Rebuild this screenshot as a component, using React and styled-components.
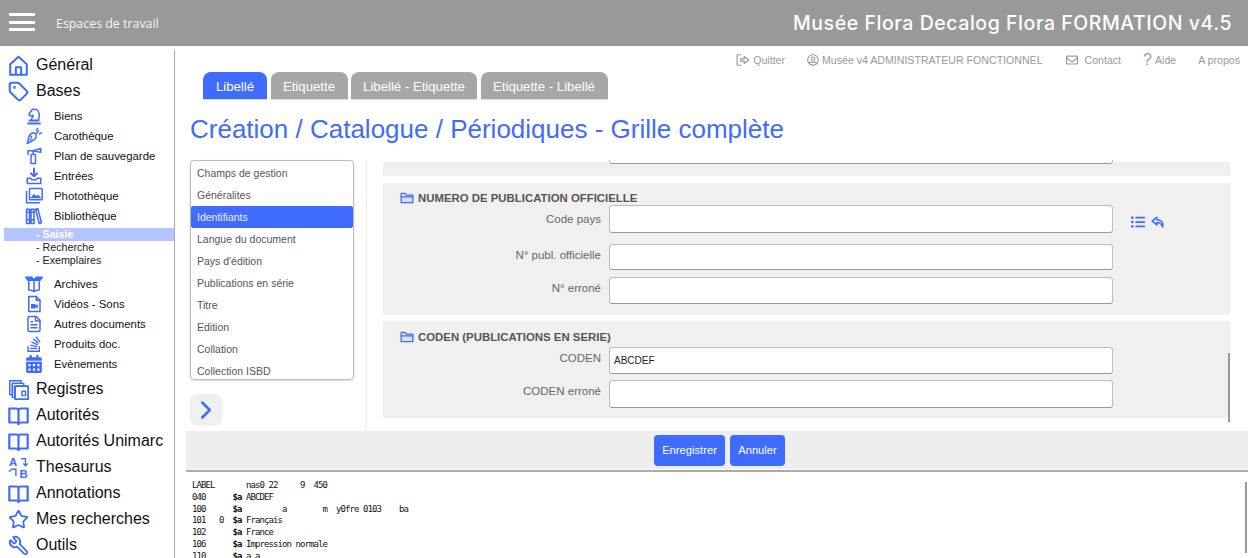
import React from "react"
import styled, { createGlobalStyle } from "styled-components"
import { Tag, FileText, Star, Wrench, ChevronRight } from "lucide-react"
import { FaStackOverflow, FaCalendarAlt, FaRegUserCircle, FaRegEnvelope, FaListUl } from "react-icons/fa"

const BLUE = "#3f6bff"

const Global = createGlobalStyle`
  html, body { margin: 0; padding: 0; background: #fff; }
  body { font-family: "Liberation Sans", Arial, sans-serif; color: #111; }
`

const Page = styled.div`
  width: 1248px;
  height: 558px;
  display: flex;
  flex-direction: column;
  overflow: hidden;
`

const Header = styled.header`
  height: 46px;
  flex: none;
  background: #999;
  color: #fff;
  display: flex;
  align-items: center;
  padding: 0 16px 0 9px;
`

const Burger = styled.div`
  width: 26px;
  height: 18px;
  margin-bottom: 2px;
  display: flex;
  flex-direction: column;
  justify-content: space-between;
  span { display: block; height: 3px; background: #fff; }
`

const Workspaces = styled.div`
  margin-left: 21px;
  font: 12.4px "Open Sans", sans-serif;
  color: #f6f6f6;
`

const AppTitle = styled.div`
  margin-left: auto;
  font: 500 19.5px Inter, sans-serif;
  letter-spacing: 0.55px;
`

const Body = styled.div`
  flex: 1;
  display: flex;
  min-height: 0;
`

const Side = styled.nav`
  width: 175px;
  flex: none;
  box-sizing: border-box;
  margin-top: 4px;
  padding-top: 2px;
  border-right: 1px solid #aaa;
`

const TopRow = styled.div`
  height: 26px;
  display: flex;
  align-items: center;
  padding-left: 8px;
  font-size: 16px;
  color: #111;
  svg { width: 21px; height: 21px; color: ${BLUE}; flex: none; margin-right: 7px; }
`

const SubList = styled.div`
  margin: ${(p) => p.$top}px 0 ${(p) => p.$bottom}px;
`

const SubRow = styled.div`
  height: 20px;
  display: flex;
  align-items: center;
  padding-left: 25px;
  font-size: 11.4px;
  color: #111;
  svg { width: 18px; height: 18px; color: ${BLUE}; flex: none; margin-right: 11px; }
`

const LeafRow = styled.div`
  height: 13px;
  line-height: 13px;
  margin-left: 4px;
  padding-left: 32px;
  font-size: 10.7px;
  color: ${(p) => (p.$active ? "#fff" : "#222")};
  font-weight: ${(p) => (p.$active ? 700 : 400)};
  background: ${(p) => (p.$active ? "#b4c6ff" : "transparent")};
`

const FlippedWrench = styled(Wrench)`
  transform: scaleX(-1);
`

const Main = styled.main`
  flex: 1;
  min-width: 0;
  display: flex;
  flex-direction: column;
`

const Links = styled.div`
  display: flex;
  justify-content: flex-end;
  align-items: center;
  height: 16px;
  margin-top: 6px;
  padding-right: 8px;
  font-size: 10.6px;
  color: #999;
`

const LinkItem = styled.span`
  display: flex;
  align-items: center;
  margin-left: ${(p) => p.$gap}px;
  svg { width: ${(p) => p.$icon || 12}px; height: ${(p) => p.$icon || 12}px; margin-right: ${(p) => p.$iconGap || 3}px; }
`

const Help = styled.span`
  font-size: 16px;
  margin-right: 3px;
`

const Tabs = styled.div`
  display: flex;
  gap: 3.5px;
  margin-top: 4px;
  padding-left: 28px;
`

const TabItem = styled.div`
  width: ${(p) => p.$w}px;
  height: 28px;
  box-sizing: border-box;
  padding-top: 2px;
  border-radius: 8px 8px 0 0;
  border-bottom: 1px solid #ddd;
  background: ${(p) => (p.$active ? BLUE : "#a6a6a6")};
  color: #fff;
  font-size: 13.2px;
  display: flex;
  align-items: center;
  justify-content: center;
`

const Title = styled.h1`
  margin: 0;
  height: 60px;
  line-height: 59px;
  padding-left: 15px;
  font-size: 26px;
  font-weight: 400;
  color: ${BLUE};
`

const Work = styled.div`
  height: 271px;
  flex: none;
  display: flex;
  margin-left: 15px;
`

const LeftCol = styled.div`
  width: 177px;
  flex: none;
  box-sizing: border-box;
  border-right: 1px solid #eee;
`

const Menu = styled.div`
  width: 164px;
  height: 220px;
  box-sizing: border-box;
  border: 1px solid #bbb;
  border-radius: 4px;
  box-shadow: 0 1px 2px rgba(0, 0, 0, 0.15);
  overflow: hidden;
  padding-top: 1px;
`

const MenuItem = styled.div`
  height: 22px;
  line-height: 22px;
  padding-left: 6px;
  font-size: 10.5px;
  border-radius: 2px;
  color: ${(p) => (p.$active ? "#eef" : "#555")};
  background: ${(p) => (p.$active ? BLUE : "transparent")};
`

const NextButton = styled.div`
  width: 32px;
  height: 32px;
  margin-top: 14px;
  border-radius: 8px;
  background: #f0f0f0;
  display: flex;
  align-items: center;
  justify-content: center;
  color: ${BLUE};
  svg { width: 30px; height: 30px; }
`

const Form = styled.div`
  position: relative;
  flex: 1;
  margin: 0 18px 0 16px;
  padding-top: 2px;
  overflow: hidden;
  display: flex;
  flex-direction: column;
`

const Section = styled.section`
  background: #f0f0f0;
  padding: ${(p) => p.$pad}px 0 ${(p) => p.$bottom}px;
  margin-bottom: ${(p) => p.$after}px;
`

const SectionHead = styled.div`
  display: flex;
  align-items: center;
  height: 14px;
  padding-left: 17px;
  margin-bottom: ${(p) => p.$after || 0}px;
  font-size: 11.4px;
  font-weight: 700;
  color: #555;
  svg { width: 14px; height: 14px; color: ${BLUE}; margin-right: 4px; }
`

const Row = styled.div`
  display: flex;
  align-items: flex-start;
  margin-bottom: ${(p) => p.$after || 0}px;
`

const Label = styled.label`
  width: 218px;
  flex: none;
  box-sizing: border-box;
  margin-right: 8px;
  padding-top: ${(p) => p.$top || 4}px;
  text-align: right;
  font-size: 11.5px;
  line-height: 14px;
  color: #666;
`

const Field = styled.div`
  width: 504px;
  height: ${(p) => p.$h}px;
  box-sizing: border-box;
  background: #fff;
  border: 1px solid #bbb;
  border-bottom-color: #999;
  border-radius: 3px;
  padding-left: 4px;
  font-size: 10px;
  line-height: 25px;
  color: #222;
`

const CutField = styled(Field)`
  margin: -2px 0 0 226px;
  border-top: 0;
  border-radius: 0 0 3px 3px;
`

const RowTools = styled.div`
  display: flex;
  align-items: center;
  gap: 6px;
  height: 28px;
  box-sizing: border-box;
  padding-top: 6px;
  margin-left: 18px;
  color: ${BLUE};
  svg { width: 14px; height: 14px; }
`

const Thumb = styled.div`
  position: absolute;
  right: 0;
  width: 2px;
  top: 193px;
  height: 69px;
  background: #999;
`

const Actions = styled.div`
  height: 38px;
  flex: none;
  margin-left: 11px;
  background: #eee;
  display: flex;
  justify-content: center;
  align-items: center;
  gap: 5px;
  padding-left: 5px;
`

const Action = styled.button`
  height: 31px;
  width: ${(p) => p.$w}px;
  padding: 0;
  border: 0;
  border-radius: 4px;
  background: ${BLUE};
  color: #fff;
  font: 11.2px "Liberation Sans", Arial, sans-serif;
`

const Panel = styled.div`
  position: relative;
  flex: 1;
  min-height: 0;
  margin: 1px 0 0 11px;
  padding: 8px 0 0 6px;
  border-top: 2px solid #aaa;
  overflow: hidden;
`

const Marc = styled.pre`
  margin: 0;
  font: 9px/11.8px "DejaVu Sans Mono", monospace;
  letter-spacing: -0.92px;
  color: #111;
  b { font-weight: 700; }
`

const PanelThumb = styled.div`
  position: absolute;
  right: 1px;
  top: 10px;
  width: 2px;
  height: 71px;
  background: #999;
`

const Glyph = ({ children, fill = "none", ...rest }) => (
  <svg viewBox="0 0 24 24" fill={fill} stroke="currentColor" strokeWidth="2" strokeLinejoin="round" strokeLinecap="round" {...rest}>
    {children}
  </svg>
)

const HomeIcon = () => (
  <Glyph strokeWidth="2.300">
    <path d="M2.500 22.500V10.500L12 2l9.500 8.500v12z" />
    <path d="M9 22v-8h6v8" />
  </Glyph>
)
const KnightIcon = () => (
  <Glyph>
    <path d="M4 22h16M6 18h12" strokeWidth="2.400" />
    <path d="M8 18c0-3 3-4 3-7l-4 1-2-2 5-7h3c4 0 6 4 6 8 0 3-1 5-1 7" />
  </Glyph>
)
const BagIcon = () => (
  <Glyph>
    <path d="M3 22l3-11c2-3 6-4 8-2s1 6-2 8z" />
    <path d="M8 12l1 2M7 16l1 1M15 8l3-3M15 4l2-2M19 9l3-1" />
  </Glyph>
)
const ExtinguisherIcon = () => (
  <Glyph>
    <path d="M8 11c0-2 6-2 6 0v11H8z" />
    <path d="M4 5h7l10-3v5L11 5.500M11 5v4M4 5v5" />
  </Glyph>
)
const InboxIcon = () => (
  <Glyph>
    <path d="M12 2v10M8 8.500l4 4 4-4" strokeWidth="2.600" />
    <path d="M3 15h5l1 2h6l1-2h5v7H3z" />
  </Glyph>
)
const PhotosIcon = () => (
  <Glyph>
    <rect x="6" y="2" width="17" height="15" rx="1" />
    <path d="M2 6v15h17" />
    <path d="M7 15l5-6 3 3 2-2 5 5z" fill="currentColor" stroke="none" />
  </Glyph>
)
const BooksIcon = () => (
  <Glyph>
    <path d="M2 3h4v19H2zM8 3h4v19H8zM14 3l3-1 5 19-3 1z" />
    <path d="M2 7h4M2 17h4M8 7h4M8 17h4" />
  </Glyph>
)
const BoxIcon = () => (
  <Glyph>
    <path d="M5 9v11c4 0 5 1 7 2 2-1 3-2 7-2V9M12 8v14" />
    <path d="M1 3h8l3 4H4zM23 3h-8l-3 4h8z" fill="currentColor" />
  </Glyph>
)
const VideoFileIcon = () => (
  <Glyph>
    <path d="M5 2h10l5 5v15H5z" />
    <path d="M15 2v5h5" />
    <path d="M8 12h6v6H8zM14 14l3-2v6l-3-2z" fill="currentColor" stroke="none" />
  </Glyph>
)
const RegistersIcon = () => (
  <Glyph>
    <path d="M2 2h13v3H5v13H2z" strokeWidth="1.700" />
    <path d="M5 5h13v3H8v13H5z" strokeWidth="1.700" />
    <path d="M8 8h15v15H8z" strokeWidth="2" />
    <path d="M16 14h4v5h-4z" strokeWidth="1.700" />
  </Glyph>
)
const BookIcon = () => (
  <Glyph strokeLinecap="butt" strokeWidth="2.500">
    <path d="M1.500 4h8c1.500 0 2.500 1 2.500 2 0-1 1-2 2.500-2h8v16h-8c-1.500 0-2.500 1-2.500 2 0-1-1-2-2.500-2h-8z" />
    <path d="M12 6v16" />
  </Glyph>
)
const AtoBIcon = () => (
  <svg viewBox="0 0 24 24" fill="none" stroke="currentColor">
    <text x="1" y="10.500" fontSize="13" fontWeight="700" fill="currentColor" stroke="none" fontFamily="Liberation Sans">A</text>
    <text x="13" y="23.500" fontSize="13" fontWeight="700" fill="currentColor" stroke="none" fontFamily="Liberation Sans">B</text>
    <path d="M15 2h5v8M17.500 7.500l2.500 2.500 2.500-2.500M9 22v-8H4M1 17l3-3" strokeWidth="1.500" />
  </svg>
)
const FolderIcon = () => (
  <Glyph fill="rgba(63,107,255,.12)" strokeWidth="2.200">
    <path d="M2 20V4h7l2 3h11v13z" />
    <path d="M2 10h20" />
  </Glyph>
)
const ExitIcon = () => (
  <Glyph strokeWidth="2">
    <path d="M8 3H2v18h6" />
    <path d="M8 10h6V6l8 6-8 6v-4H8z" />
  </Glyph>
)
const ReplyIcon = () => (
  <Glyph strokeWidth="2.600">
    <path d="M10 4L2 10.500l8 6.500v-4c5 0 8 2 10 7.500 2-8-3-12.500-10-12.500z" />
  </Glyph>
)

const subItems = [
  ["Biens", KnightIcon],
  ["Carothèque", BagIcon],
  ["Plan de sauvegarde", ExtinguisherIcon],
  ["Entrées", InboxIcon],
  ["Photothèque", PhotosIcon],
  ["Bibliothèque", BooksIcon]
]
const subItemsAfter = [
  ["Archives", BoxIcon],
  ["Vidéos - Sons", VideoFileIcon],
  ["Autres documents", FileText],
  ["Produits doc.", FaStackOverflow],
  ["Evènements", FaCalendarAlt]
]
const bottomItems = [
  ["Registres", RegistersIcon],
  ["Autorités", BookIcon],
  ["Autorités Unimarc", BookIcon],
  ["Thesaurus", AtoBIcon],
  ["Annotations", BookIcon],
  ["Mes recherches", Star],
  ["Outils", FlippedWrench]
]
const menu = [
  "Champs de gestion",
  "Généralites",
  "Identifiants",
  "Langue du document",
  "Pays d'édition",
  "Publications en série",
  "Titre",
  "Edition",
  "Collation",
  "Collection ISBD"
]
const tabs = [
  ["Libellé", 64],
  ["Etiquette", 77],
  ["Libellé - Etiquette", 126],
  ["Etiquette - Libellé", 127]
]

export default function App() {
  return (
    <Page>
      <Global />
      <Header>
        <Burger>
          <span />
          <span />
          <span />
        </Burger>
        <Workspaces>Espaces de travail</Workspaces>
        <AppTitle>Musée Flora Decalog Flora FORMATION v4.5</AppTitle>
      </Header>
      <Body>
        <Side>
          <TopRow><HomeIcon />Général</TopRow>
          <TopRow><Tag strokeWidth={2.4} />Bases</TopRow>
          <SubList $top={2} $bottom={2}>
            {subItems.map(([name, Icon]) => (
              <SubRow key={name}><Icon />{name}</SubRow>
            ))}
          </SubList>
          <LeafRow $active>- Saisie</LeafRow>
          <LeafRow>- Recherche</LeafRow>
          <LeafRow>- Exemplaires</LeafRow>
          <SubList $top={7} $bottom={2}>
            {subItemsAfter.map(([name, Icon]) => (
              <SubRow key={name}><Icon />{name}</SubRow>
            ))}
          </SubList>
          {bottomItems.map(([name, Icon]) => (
            <TopRow key={name}><Icon />{name}</TopRow>
          ))}
        </Side>
        <Main>
          <Links>
            <LinkItem $icon={14}><ExitIcon />Quitter</LinkItem>
            <LinkItem $gap={22}><FaRegUserCircle />Musée v4 ADMINISTRATEUR FONCTIONNEL</LinkItem>
            <LinkItem $gap={23} $iconGap={7}><FaRegEnvelope />Contact</LinkItem>
            <LinkItem $gap={22}><Help>?</Help>Aide</LinkItem>
            <LinkItem $gap={22}>A propos</LinkItem>
          </Links>
          <Tabs>
            {tabs.map(([label, w], i) => (
              <TabItem key={label} $w={w} $active={i === 0}>{label}</TabItem>
            ))}
          </Tabs>
          <Title>Création / Catalogue / Périodiques - Grille complète</Title>
          <Work>
            <LeftCol>
              <Menu>
                {menu.map((item) => (
                  <MenuItem key={item} $active={item === "Identifiants"}>{item}</MenuItem>
                ))}
              </Menu>
              <NextButton><ChevronRight /></NextButton>
            </LeftCol>
            <Form>
              <Section $pad={0} $bottom={12} $after={7}>
                <CutField $h={4} />
              </Section>
              <Section $pad={8} $bottom={11} $after={6}>
                <SectionHead><FolderIcon />NUMERO DE PUBLICATION OFFICIELLE</SectionHead>
                <Row $after={11}>
                  <Label $top={7}>Code pays</Label>
                  <Field $h={28} />
                  <RowTools><FaListUl /><ReplyIcon /></RowTools>
                </Row>
                <Row $after={7}>
                  <Label>N° publ. officielle</Label>
                  <Field $h={26} />
                </Row>
                <Row>
                  <Label>N° erroné</Label>
                  <Field $h={27} />
                </Row>
              </Section>
              <Section $pad={9} $bottom={10}>
                <SectionHead $after={3}><FolderIcon />CODEN (PUBLICATIONS EN SERIE)</SectionHead>
                <Row $after={6}>
                  <Label>CODEN</Label>
                  <Field $h={27}>ABCDEF</Field>
                </Row>
                <Row>
                  <Label>CODEN erroné</Label>
                  <Field $h={28} />
                </Row>
              </Section>
              <Thumb />
            </Form>
          </Work>
          <Actions>
            <Action $w={71}>Enregistrer</Action>
            <Action $w={55}>Annuler</Action>
          </Actions>
          <Panel>
            <Marc>
              {"LABEL       nas0 22     9  450\n"}
              {"040      "}<b>$a</b>{" ABCDEF\n"}
              {"100      "}<b>$a</b>{"         a        m  y0fre 0103    ba\n"}
              {"101   0  "}<b>$a</b>{" Français\n"}
              {"102      "}<b>$a</b>{" France\n"}
              {"106      "}<b>$a</b>{" Impression normale\n"}
              {"110      "}<b>$a</b>{" a a\n"}
            </Marc>
            <PanelThumb />
          </Panel>
        </Main>
      </Body>
    </Page>
  )
}
